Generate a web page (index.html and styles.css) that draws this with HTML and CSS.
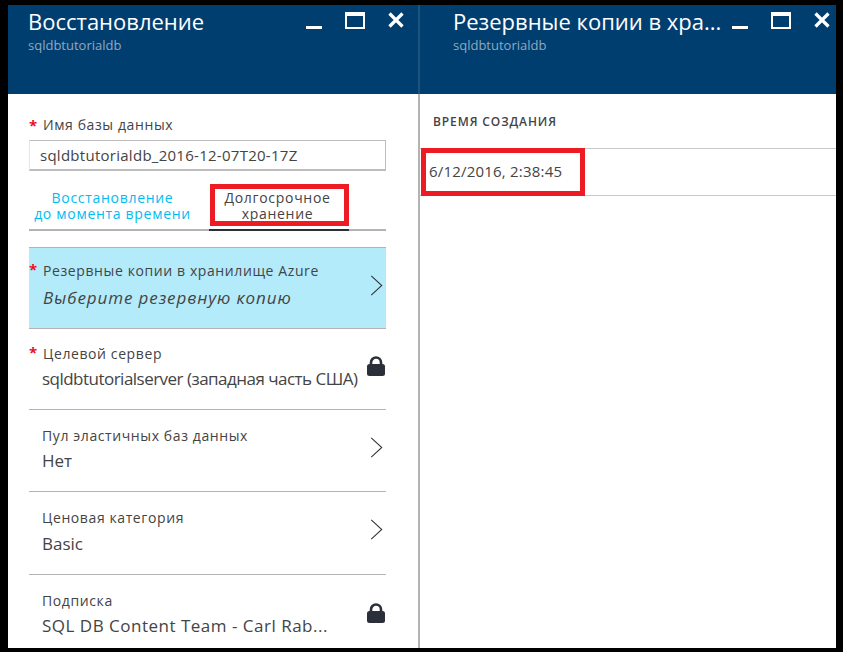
FILE: index.html
```html
<!DOCTYPE html>
<html lang="en">
<head>
    <meta charset="UTF-8">
    <title>Восстановление</title>
    <link rel="stylesheet" href="styles.css">
</head>
<body>
    <div class="desktop">
        <!-- Restore blade -->
        <section class="blade blade-left">
            <header class="blade-header">
                <div class="blade-titles">
                    <h1>Восстановление</h1>
                    <p>sqldbtutorialdb</p>
                </div>
                <div class="window-buttons">
                    <span class="btn-min"></span>
                    <span class="btn-max"></span>
                    <svg class="btn-close" width="16" height="16" viewBox="0 0 16 16"><path d="M1.5 1.5L14.5 14.5M14.5 1.5L1.5 14.5" stroke="#fff" stroke-width="3.2" fill="none"/></svg>
                </div>
            </header>
            <div class="blade-body">
                <label class="field-label"><span class="req">*</span>Имя базы данных</label>
                <div class="text-input">sqldbtutorialdb_2016-12-07T20-17Z</div>
                <div class="tabs">
                    <div class="tab tab-link">Восстановление<br>до момента времени</div>
                    <div class="tab tab-active">Долгосрочное<br>хранение</div>
                    <div class="callout callout-tab"></div>
                </div>
                <ul class="rows">
                    <li class="row row-selected">
                        <div class="row-text">
                            <span class="req">*</span>
                            <div class="row-label label-indent">Резервные копии в хранилище Azure</div>
                            <div class="row-value row-hint">Выберите резервную копию</div>
                        </div>
                        <svg class="chevron" width="13" height="21" viewBox="0 0 13 22"><path d="M1 1L12 11L1 21" stroke="#333" stroke-width="1.1" fill="none"/></svg>
                    </li>
                    <li class="row row-server">
                        <div class="row-text">
                            <span class="req req-server">*</span>
                            <div class="row-label label-indent">Целевой сервер</div>
                            <div class="row-value value-squeezed">sqldbtutorialserver (западная часть США)</div>
                        </div>
                        <svg class="lock" width="18" height="20" viewBox="0 0 18 20"><path d="M4 9V6.5a5 5 0 0 1 10 0V9" stroke="#2b2f3a" stroke-width="2.6" fill="none"/><rect x="0" y="8" width="18" height="12" rx="2.5" fill="#2b2f3a"/></svg>
                    </li>
                    <li class="row row-pool">
                        <div class="row-text">
                            <div class="row-label">Пул эластичных баз данных</div>
                            <div class="row-value">Нет</div>
                        </div>
                        <svg class="chevron" width="13" height="21" viewBox="0 0 13 22"><path d="M1 1L12 11L1 21" stroke="#333" stroke-width="1.1" fill="none"/></svg>
                    </li>
                    <li class="row row-tier">
                        <div class="row-text">
                            <div class="row-label">Ценовая категория</div>
                            <div class="row-value value-tier">Basic</div>
                        </div>
                        <svg class="chevron" width="13" height="21" viewBox="0 0 13 22"><path d="M1 1L12 11L1 21" stroke="#333" stroke-width="1.1" fill="none"/></svg>
                    </li>
                    <li class="row row-last">
                        <div class="row-text">
                            <div class="row-label">Подписка</div>
                            <div class="row-value value-spaced">SQL DB Content Team - Carl Rab...</div>
                        </div>
                        <svg class="lock lock-last" width="18" height="20" viewBox="0 0 18 20"><path d="M4 9V6.5a5 5 0 0 1 10 0V9" stroke="#2b2f3a" stroke-width="2.6" fill="none"/><rect x="0" y="8" width="18" height="12" rx="2.5" fill="#2b2f3a"/></svg>
                    </li>
                </ul>
            </div>
        </section>

        <!-- Backups blade -->
        <section class="blade blade-right">
            <header class="blade-header">
                <div class="blade-titles">
                    <h1>Резервные копии в хра...</h1>
                    <p>sqldbtutorialdb</p>
                </div>
                <div class="window-buttons">
                    <span class="btn-min"></span>
                    <span class="btn-max"></span>
                    <svg class="btn-close" width="16" height="16" viewBox="0 0 16 16"><path d="M1.5 1.5L14.5 14.5M14.5 1.5L1.5 14.5" stroke="#fff" stroke-width="3.2" fill="none"/></svg>
                </div>
            </header>
            <div class="blade-body-right">
                <div class="col-head">ВРЕМЯ СОЗДАНИЯ</div>
                <div class="backup-row">6/12/2016, 2:38:45</div>
                <div class="callout callout-row"></div>
            </div>
        </section>
    </div>
</body>
</html>
```

FILE: styles.css
```css
html, body {
    margin: 0;
    height: 100%;
    overflow: hidden;
    background: #000;
}
body {
    font-family: "Open Sans", "Noto Sans", sans-serif;
    color: #444;
}
.desktop {
    display: flex;
    height: 643px;
    padding: 5px 7px 4px 8px;
}
.blade {
    display: flex;
    flex-direction: column;
    background: #fff;
    overflow: hidden;
}
.blade-left {
    flex-shrink: 0;
    width: 412px;
}
.blade-right {
    flex: 1;
    min-width: 0;
}
.blade-header {
    display: flex;
    justify-content: space-between;
    height: 89px;
    background: #003e6f;
    color: #fff;
    flex-shrink: 0;
}
.blade-left .blade-header {
    padding: 0 14px 0 20px;
    border-right: 2px solid #1c5480;
}
.blade-right .blade-header {
    padding: 0 6px 0 33px;
}
.blade-titles h1 {
    margin: 0;
    font-size: 22px;
    font-weight: 400;
    line-height: 32px;
    white-space: nowrap;
}
.blade-titles p {
    margin: 1px 0 0;
    font-size: 13px;
    line-height: 14px;
    color: #8fa9c2;
}
.window-buttons {
    display: flex;
    align-items: flex-start;
    padding-top: 7px;
}
.btn-min {
    width: 16px;
    height: 3px;
    margin-top: 14px;
    margin-right: 23px;
    background: #fff;
}
.btn-max {
    width: 20px;
    height: 17px;
    box-sizing: border-box;
    border: 2px solid #fff;
    border-top-width: 4px;
    margin-right: 23px;
}
.blade-body {
    flex: 1;
    padding: 0 32px 0 21px;
    border-right: 2px solid #b3b3b3;
}
.field-label {
    display: block;
    font-size: 14px;
    line-height: 18px;
    margin-top: 22px;
    padding-left: 14px;
    position: relative;
    letter-spacing: 0.6px;
}
.req {
    position: absolute;
    left: 0;
    top: 0;
    color: #e81123;
    font-weight: 700;
    font-size: 15px;
}
.text-input {
    box-sizing: border-box;
    height: 31px;
    margin-top: 6px;
    padding: 0 10px;
    line-height: 29px;
    font-size: 15px;
    letter-spacing: 0.27px;
    border: 1px solid #bdbdbd;
    border-left-color: #e6e6e6;
    border-bottom-width: 2px;
}
.tabs {
    display: flex;
    position: relative;
    height: 46px;
    margin-top: 12px;
    border-bottom: 2px solid #b3b3b3;
}
.tab {
    font-size: 14px;
    line-height: 16px;
    text-align: center;
    padding-top: 7px;
    letter-spacing: 0.7px;
    box-sizing: border-box;
}
.tab-link {
    width: 180px;
    padding-right: 13px;
    color: #00bcf2;
}
.tab-active {
    width: 140px;
    height: 48px;
    padding-right: 3px;
    border-bottom: 2px solid #2b2f3a;
}
.callout {
    position: absolute;
    box-sizing: border-box;
    border: 5px solid #ed1c24;
}
.callout-tab {
    left: 181px;
    top: 1px;
    width: 139px;
    height: 42px;
}
.rows {
    list-style: none;
    margin: 16px 0 0;
    padding: 0;
}
.row {
    display: flex;
    align-items: flex-start;
    justify-content: space-between;
    box-sizing: border-box;
    height: 81px;
    padding: 0 0 0 13px;
    border-top: 1px solid #b3b3b3;
}
.row-selected {
    background: #b3ebfb;
}
.row-pool {
    height: 82px;
}
.row-tier {
    height: 83px;
}
.row-last {
    height: 74px;
}
.row-text {
    position: relative;
    padding-top: 17px;
}
.row-selected .row-text {
    padding-top: 14px;
}
.row-server .row-text {
    padding-top: 16px;
}
.row-text .req {
    left: -13px;
    top: 11px;
}
.row-text .req-server {
    top: 13px;
}
.row-label {
    font-size: 14px;
    line-height: 18px;
    letter-spacing: 0.6px;
}
.label-indent {
    padding-left: 1px;
}
.row-value {
    font-size: 17px;
    line-height: 22px;
    margin-top: 5px;
    white-space: nowrap;
}
.value-tier {
    margin-top: 6px;
}
.value-squeezed {
    letter-spacing: -0.52px;
}
.value-spaced {
    letter-spacing: 0.5px;
}
.row-hint {
    margin-top: 7px;
    padding-left: 1px;
    font-style: italic;
    letter-spacing: 0.9px;
}
.chevron {
    margin: 27px 3px 0 0;
}
.lock {
    margin: 27px 1px 0 0;
}
.lock-last {
    margin-top: 28px;
}
.blade-body-right {
    position: relative;
    flex: 1;
}
.col-head {
    font-size: 12px;
    font-weight: 600;
    line-height: 16px;
    padding: 20px 0 18px 13px;
    letter-spacing: 0.9px;
    border-bottom: 1px solid #c8c8c8;
}
.backup-row {
    box-sizing: border-box;
    height: 47px;
    padding-left: 9px;
    line-height: 45px;
    font-size: 15px;
    letter-spacing: 0.2px;
    border-bottom: 1px solid #c8c8c8;
}
.callout-row {
    left: 1px;
    top: 54px;
    width: 164px;
    height: 48px;
}
```
